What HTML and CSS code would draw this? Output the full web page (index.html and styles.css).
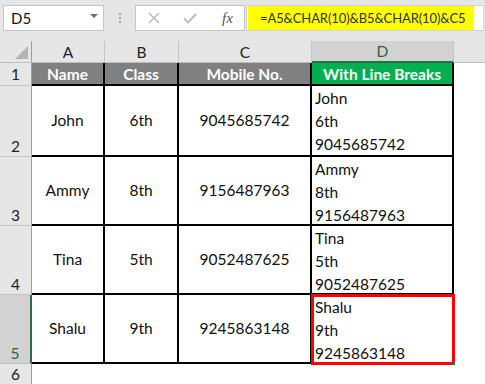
FILE: index.html
```
<html lang="en">
<head>
    <meta charset="UTF-8">
    <title>Line Breaks with CHAR(10)</title>
    <link rel="stylesheet" href="styles.css">
</head>
<body>
    <div class="topbar">
        <div class="namebox">
            <span>D5</span>
            <svg class="drop" width="8" height="4" viewBox="0 0 8 4"><path d="M0 0H8L4 4Z" fill="#6b6b6b"/></svg>
        </div>
        <div class="grip"><i></i><i></i><i></i></div>
        <div class="fxbox">
            <svg width="12" height="12" viewBox="0 0 12 12"><path d="M1 1L11 11M11 1L1 11" stroke="#bcbcbc" stroke-width="1.6" fill="none"/></svg>
            <svg width="14" height="11" viewBox="0 0 14 11"><path d="M1 5.5L5 9.5L13 1" stroke="#bcbcbc" stroke-width="2" fill="none"/></svg>
            <span class="fx">fx</span>
        </div>
        <div class="formula">
            <span class="hl">=A5&amp;CHAR(10)&amp;B5&amp;CHAR(10)&amp;C5</span>
        </div>
    </div>

    <div class="sheet">
        <div class="corner"><span class="tri"></span></div>
        <div class="colhead">A</div>
        <div class="colhead">B</div>
        <div class="colhead">C</div>
        <div class="colhead active">D</div>
        <div class="colhead rest"></div>

        <div class="rowhead mid">1</div>
        <div class="cell th">Name</div>
        <div class="cell th">Class</div>
        <div class="cell th">Mobile No.</div>
        <div class="cell th green">With Line Breaks</div>
        <div class="blank"></div>

        <div class="rowhead">2</div>
        <div class="cell">John</div>
        <div class="cell">6th</div>
        <div class="cell">9045685742</div>
        <div class="cell multi">John<br>6th<br>9045685742</div>
        <div class="blank"></div>

        <div class="rowhead">3</div>
        <div class="cell">Ammy</div>
        <div class="cell">8th</div>
        <div class="cell">9156487963</div>
        <div class="cell multi">Ammy<br>8th<br>9156487963</div>
        <div class="blank"></div>

        <div class="rowhead">4</div>
        <div class="cell">Tina</div>
        <div class="cell">5th</div>
        <div class="cell">9052487625</div>
        <div class="cell multi">Tina<br>5th<br>9052487625</div>
        <div class="blank"></div>

        <div class="rowhead active">5</div>
        <div class="cell">Shalu</div>
        <div class="cell">9th</div>
        <div class="cell">9245863148</div>
        <div class="cell multi picked">Shalu<br>9th<br>9245863148<span class="handle"></span></div>
        <div class="blank"></div>

        <div class="rowhead last">6</div>
        <div class="blank"></div>
        <div class="blank"></div>
        <div class="blank"></div>
        <div class="blank"></div>
        <div class="blank"></div>
    </div>
</body>
</html>
```

FILE: styles.css
```
* {
    margin: 0;
    padding: 0;
    box-sizing: border-box;
}

body {
    font-family: Lato, "Noto Sans", sans-serif;
    font-size: 15.5px;
    color: #111;
    background: #fff;
    width: 485px;
    height: 384px;
    overflow: hidden;
}

/* formula bar */

.topbar {
    height: 41px;
    background: #e6e6e6;
    display: flex;
    align-items: flex-start;
    padding: 5px 0 0 3px;
}

.namebox {
    width: 101px;
    height: 26px;
    background: #fff;
    border: 1px solid #c6c6c6;
    display: flex;
    align-items: center;
    justify-content: space-between;
    padding: 0 5px 0 7px;
    font-size: 15px;
}

.drop {
    margin-top: -4px;
}

.grip {
    width: 31px;
    height: 26px;
    display: flex;
    flex-direction: column;
    align-items: center;
    justify-content: center;
    gap: 2px;
}

.grip i {
    width: 2px;
    height: 2px;
    background: #a6a6a6;
}

.fxbox {
    width: 110px;
    height: 26px;
    background: #fff;
    border: 1px solid #c6c6c6;
    display: flex;
    align-items: center;
    gap: 23px;
    padding-left: 12px;
}

.fx {
    font-family: "Liberation Serif", serif;
    font-style: italic;
    font-size: 15px;
    color: #555;
    margin-left: 2px;
}

.formula {
    width: 238px;
    height: 26px;
    background: #fff;
    border: 1px solid #d4d4d4;
    margin-left: 1px;
    padding: 0 9px 0 1px;
}

.hl {
    display: block;
    height: 24px;
    line-height: 24px;
    background: #ffff00;
    padding-left: 12px;
    font-size: 13px;
    letter-spacing: -0.1px;
    white-space: nowrap;
    color: #333;
}

/* sheet */

.sheet {
    display: grid;
    grid-template-columns: 32px 73px 74px 133px 142px 1fr;
    grid-template-rows: 22px 23px 71px 69px 69px 69px 1fr;
    height: 343px;
}

.corner,
.colhead {
    background: #e6e6e6;
    border-right: 1px solid #c4c4c4;
    border-bottom: 1px solid #bdbdbd;
    display: flex;
    align-items: center;
    justify-content: center;
    color: #222;
}

.corner {
    position: relative;
    border-right-color: #9e9e9e;
}

.tri {
    position: absolute;
    right: 3px;
    bottom: 3px;
    width: 0;
    height: 0;
    border-left: 13px solid transparent;
    border-bottom: 13px solid #b5b5b5;
}

.colhead.active {
    background: #d2d2d2;
    color: #1e6b45;
    border-bottom: 2px solid #217346;
}

.colhead.rest {
    border-right: none;
}

.rowhead {
    background: #e6e6e6;
    border-right: 1px solid #9e9e9e;
    border-bottom: 1px solid #c4c4c4;
    display: flex;
    align-items: flex-end;
    justify-content: center;
    padding-bottom: 1px;
    color: #222;
}

.rowhead.mid {
    align-items: center;
    padding-bottom: 0;
}

.rowhead.active {
    background: #d2d2d2;
    color: #1e6b45;
    border-right: 2px solid #217346;
}

.rowhead.last {
    border-bottom: none;
}

.cell {
    border-right: 2px solid #000;
    border-bottom: 2px solid #000;
    display: flex;
    align-items: center;
    justify-content: center;
    padding-bottom: 2px;
}

.cell.th {
    background: #808080;
    color: #fff;
    font-weight: bold;
    padding-bottom: 0;
}

.cell.green {
    background: #00b050;
}

.cell.multi {
    display: block;
    line-height: 23px;
    padding: 1px 0 0 3px;
}

.cell.picked {
    position: relative;
    outline: 3px solid #ff0000;
    outline-offset: -2px;
}

.handle {
    position: absolute;
    right: -3px;
    bottom: -3px;
    width: 3px;
    height: 3px;
    background: #217346;
}

.blank {
    background: #fff;
}
```
